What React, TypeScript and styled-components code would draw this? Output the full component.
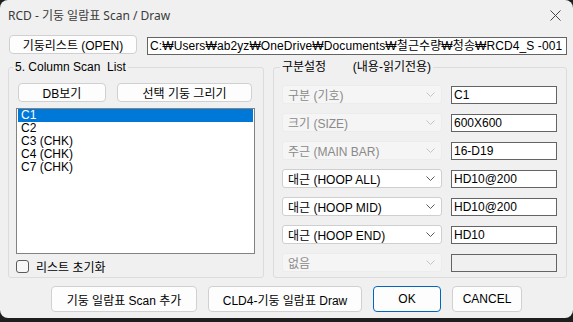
import React from 'react';
import styled, { createGlobalStyle } from 'styled-components';

const GlobalStyle = createGlobalStyle`
  html, body {
    margin: 0;
    padding: 0;
    background: #1e1e1e;
  }
  * {
    box-sizing: border-box;
  }
`;

const FONT = `"Liberation Sans", "Noto Sans CJK KR", sans-serif`;

const Window = styled.div`
  width: 573px;
  height: 318px;
  background: #f0f0f0;
  border-radius: 8px;
  overflow: hidden;
  display: flex;
  flex-direction: column;
  font-family: ${FONT};
  font-size: 12px;
  color: #000;
`;

const TitleBar = styled.div`
  height: 30px;
  display: flex;
  align-items: center;
  justify-content: space-between;
  padding: 0 12px 0 8px;
`;

const Title = styled.div`
  font-family: "Noto Sans", "Noto Sans CJK KR", sans-serif;
  font-size: 12px;
  color: #3a3a3a;
`;

const Content = styled.div`
  padding: 0 6px 0 8px;
  display: flex;
  flex-direction: column;
`;

const TopRow = styled.div`
  display: flex;
  align-items: flex-start;
  margin-top: 5px;
  margin-left: 1px;
`;

const Button = styled.button<{ $w: number; $h?: number; $default?: boolean }>`
  width: ${p => p.$w}px;
  height: ${p => p.$h ?? 19}px;
  padding: 0;
  margin: 0;
  font-family: ${FONT};
  font-size: 12px;
  color: #000;
  background: #fdfdfd;
  border: 1px solid ${p => (p.$default ? '#0067c0' : '#d0d0d0')};
  border-radius: 4px;
  white-space: pre;
`;

const PathBox = styled.div`
  width: 420px;
  height: 18px;
  margin: 2px 0 0 10px;
  padding: 1px 2px;
  border: 1px solid #646464;
  background: #fff;
  white-space: nowrap;
  overflow: hidden;
  line-height: 14px;
  letter-spacing: 0.1px;
`;

const Groups = styled.div`
  display: flex;
  gap: 9px;
  margin-top: 5px;
`;

const Group = styled.fieldset<{ $w: number }>`
  width: ${p => p.$w}px;
  height: 218px;
  margin: 0;
  padding: 0;
  border: 1px solid #dcdcdc;
  border-radius: 3px;
  min-width: 0;
`;

const Legend = styled.legend<{ $offset: number }>`
  margin-left: ${p => p.$offset}px;
  padding: 0 2px;
  line-height: 14px;
  white-space: pre;
`;

const LeftInner = styled.div`
  padding: 9px 0 0 7px;
  display: flex;
  flex-direction: column;
`;

const ButtonRow = styled.div`
  display: flex;
  gap: 11px;
  margin-left: 2px;
`;

const ListBox = styled.div`
  width: 239px;
  height: 146px;
  margin-top: 6px;
  background: #fff;
  border: 1px solid #828282;
  padding: 0 1px;
`;

const ListItem = styled.div<{ $selected?: boolean }>`
  height: 13px;
  line-height: 13px;
  padding-left: 3px;
  background: ${p => (p.$selected ? '#0078d7' : 'transparent')};
  color: ${p => (p.$selected ? '#fff' : '#000')};
  white-space: pre;
`;

const CheckRow = styled.label`
  display: flex;
  align-items: center;
  gap: 7px;
  margin-top: 6px;
  height: 13px;
`;

const CheckBox = styled.span`
  width: 13px;
  height: 13px;
  border: 1px solid #5a5a5a;
  border-radius: 3px;
  background: #f7f7f7;
`;

const RightInner = styled.div`
  padding: 11px 0 0 8px;
  display: flex;
  flex-direction: column;
  gap: 9px;
`;

const FieldRow = styled.div`
  display: flex;
  align-items: flex-start;
  gap: 9px;
  height: 19px;
`;

const Combo = styled.div<{ $disabled?: boolean }>`
  width: 160px;
  height: 19px;
  display: flex;
  align-items: center;
  justify-content: space-between;
  padding: 0 6px 0 5px;
  border: 1px solid ${p => (p.$disabled ? '#ececec' : '#cfcfcf')};
  border-radius: 3px;
  background: ${p => (p.$disabled ? '#f5f5f5' : '#fff')};
  color: ${p => (p.$disabled ? '#8a8a8a' : '#000')};
  white-space: pre;
`;

const TextBox = styled.div<{ $disabled?: boolean }>`
  width: 106px;
  height: 18px;
  margin-top: 1px;
  padding: 0 2px;
  line-height: 16px;
  border: 1px solid #646464;
  background: ${p => (p.$disabled ? '#f0f0f0' : '#fff')};
`;

const BottomRow = styled.div`
  display: flex;
  gap: 11px;
  margin: 8px 0 0 43px;
`;

const Chevron = ({ disabled }: { disabled?: boolean }) => (
  <svg width="9" height="5" viewBox="0 0 9 5">
    <polyline points="0.5,0.5 4.5,4.5 8.5,0.5" fill="none" stroke={disabled ? '#c4c4c4' : '#5a5a5a'} strokeWidth="1" />
  </svg>
);

const CloseIcon = () => (
  <svg width="11" height="11" viewBox="0 0 11 11">
    <path d="M0.5 0.5 L10.5 10.5 M10.5 0.5 L0.5 10.5" stroke="#444" strokeWidth="1" />
  </svg>
);

const fields = [
  { label: '구분 (기호)', value: 'C1', disabled: true },
  { label: '크기 (SIZE)', value: '600X600', disabled: true },
  { label: '주근 (MAIN BAR)', value: '16-D19', disabled: true },
  { label: '대근 (HOOP ALL)', value: 'HD10@200' },
  { label: '대근 (HOOP MID)', value: 'HD10@200' },
  { label: '대근 (HOOP END)', value: 'HD10' },
  { label: '없음', value: '', disabled: true, boxDisabled: true },
];

const columns = ['C1', 'C2', 'C3 (CHK)', 'C4 (CHK)', 'C7 (CHK)'];

function App() {
  return (
    <>
      <GlobalStyle />
      <Window>
        <TitleBar>
          <Title>RCD - 기둥 일람표 Scan / Draw</Title>
          <CloseIcon />
        </TitleBar>
        <Content>
          <TopRow>
            <Button $w={128}>기둥리스트 (OPEN)</Button>
            <PathBox>C:₩Users₩ab2yz₩OneDrive₩Documents₩철근수량₩청송₩RCD4_S -001</PathBox>
          </TopRow>
          <Groups>
            <Group $w={256}>
              <Legend $offset={4}>5. Column Scan  List</Legend>
              <LeftInner>
                <ButtonRow>
                  <Button $w={88}>DB보기</Button>
                  <Button $w={135}>선택 기둥 그리기</Button>
                </ButtonRow>
                <ListBox>
                  {columns.map((c, i) => (
                    <ListItem key={c} $selected={i === 0}>{c}</ListItem>
                  ))}
                </ListBox>
                <CheckRow>
                  <CheckBox />
                  리스트 초기화
                </CheckRow>
              </LeftInner>
            </Group>
            <Group $w={294}>
              <Legend $offset={6}>구분설정        (내용-읽기전용)</Legend>
              <RightInner>
                {fields.map(f => (
                  <FieldRow key={f.label}>
                    <Combo $disabled={f.disabled}>
                      {f.label}
                      <Chevron disabled={f.disabled} />
                    </Combo>
                    <TextBox $disabled={f.boxDisabled}>{f.value}</TextBox>
                  </FieldRow>
                ))}
              </RightInner>
            </Group>
          </Groups>
          <BottomRow>
            <Button $w={146} $h={26}>기둥 일람표 Scan 추가</Button>
            <Button $w={154} $h={26}>CLD4-기둥 일람표 Draw</Button>
            <Button $w={68} $h={26} $default>OK</Button>
            <Button $w={70} $h={26}>CANCEL</Button>
          </BottomRow>
        </Content>
      </Window>
    </>
  );
}

export default App;
